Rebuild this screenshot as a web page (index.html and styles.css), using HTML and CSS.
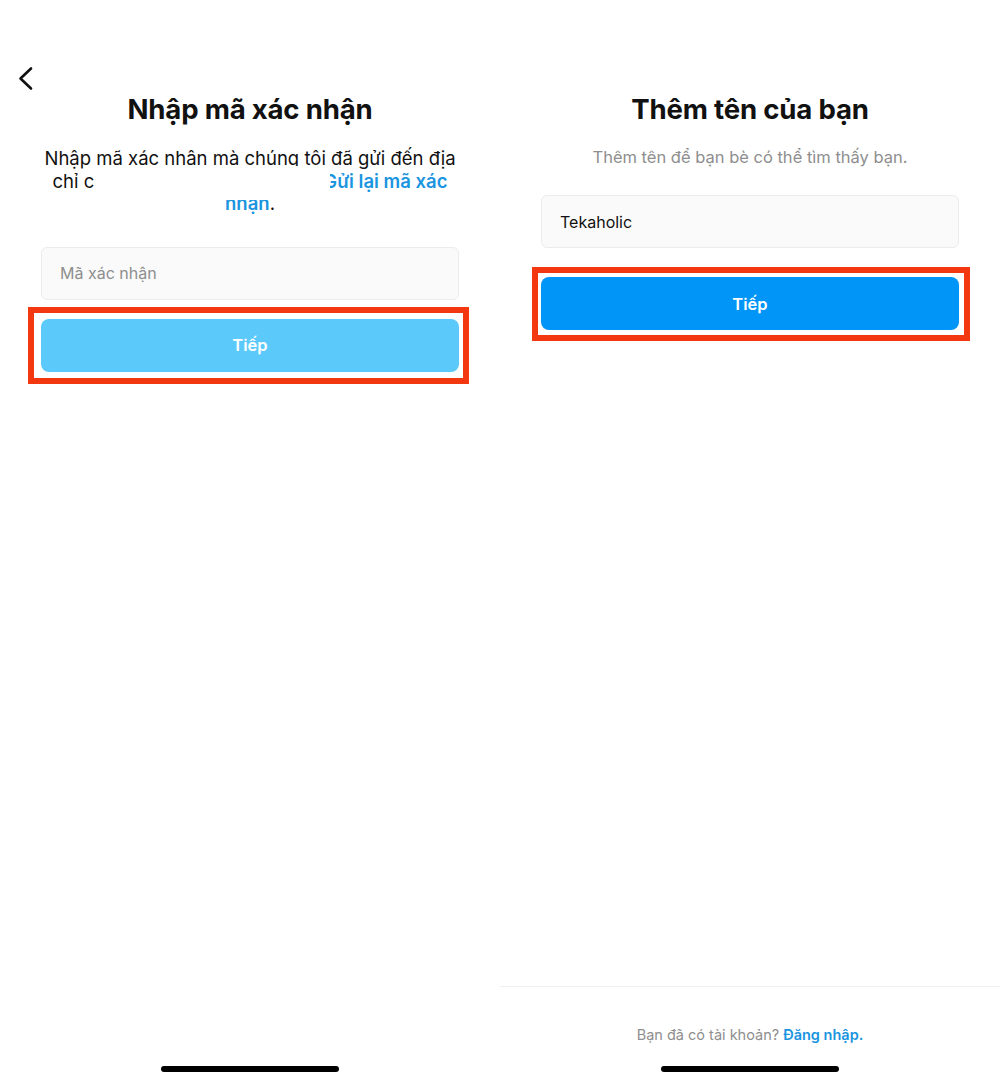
FILE: index.html
```html
<!DOCTYPE html>
<html lang="vi">
<head>
    <meta charset="UTF-8">
    <meta name="viewport" content="width=device-width, initial-scale=1.0">
    <title>Đăng ký</title>
    <link rel="stylesheet" href="styles.css">
</head>
<body>
    <div class="screens">
        <!-- Step: confirmation code -->
        <section class="screen">
            <div class="nav">
                <button class="back" aria-label="Quay lại">
                    <svg width="18" height="26" viewBox="0 0 18 26">
                        <polyline points="14,2.5 3.5,12.5 14,22.5" fill="none" stroke="#111" stroke-width="2.6" stroke-linecap="round" stroke-linejoin="round"/>
                    </svg>
                </button>
            </div>
            <div class="content">
                <h1 class="title">Nhập mã xác nhận</h1>
                <p class="desc">
                    <span class="line">Nhập mã xác nhận mà chúng tôi đã gửi đến địa</span>
                    <span class="line">chỉ c<span class="gap"></span><a class="link" href="#">Gửi lại mã xác</a></span>
                    <span class="line"><a class="link" href="#">nhận</a>.</span>
                    <span class="redacted"></span>
                </p>
                <div class="field field-code">
                    <span class="placeholder">Mã xác nhận</span>
                </div>
                <div class="highlight highlight-left">
                    <button class="btn btn-disabled">Tiếp</button>
                </div>
            </div>
            <div class="home-bar"></div>
        </section>

        <!-- Step: add name -->
        <section class="screen">
            <div class="nav"></div>
            <div class="content">
                <h1 class="title">Thêm tên của bạn</h1>
                <p class="subtitle">Thêm tên để bạn bè có thể tìm thấy bạn.</p>
                <div class="field field-name">
                    <span class="value">Tekaholic</span>
                </div>
                <div class="highlight highlight-right">
                    <button class="btn">Tiếp</button>
                </div>
            </div>
            <div class="footer">
                Bạn đã có tài khoản? <a class="link" href="#">Đăng nhập.</a>
            </div>
            <div class="home-bar"></div>
        </section>
    </div>
</body>
</html>
```

FILE: styles.css
```css
:root {
    --text: #111111;
    --muted: #8e8e8e;
    --field-bg: #fafafa;
    --field-border: #ececec;
    --link: #1b95e0;
    --btn: #0095f6;
    --btn-disabled: #5cc9fb;
    --mark: #f3370f;
}

* {
    margin: 0;
    padding: 0;
    box-sizing: border-box;
}

body {
    font-family: Inter, "Noto Sans", sans-serif;
    background: #ffffff;
    color: var(--text);
}

.screens {
    display: grid;
    grid-template-columns: 500px 500px;
    height: 1082px;
}

.screen {
    display: flex;
    flex-direction: column;
    height: 1082px;
}

.nav {
    height: 93px;
    padding: 66px 0 0 17px;
}

.back {
    border: none;
    background: none;
    display: block;
}

.content {
    flex: 1;
    padding: 0 41px;
    display: flex;
    flex-direction: column;
}

.title {
    font-size: 27.6px;
    font-weight: 700;
    line-height: 32px;
    text-align: center;
    letter-spacing: -0.2px;
}

.desc {
    position: relative;
    margin-top: 22px;
    font-size: 18.5px;
    line-height: 22.5px;
    text-align: center;
}

.desc .line {
    display: block;
    white-space: nowrap;
}

.gap {
    display: inline-block;
    width: 229px;
}

/* white box hiding the e-mail address */
.redacted {
    position: absolute;
    left: 53px;
    top: 19px;
    width: 236px;
    height: 34px;
    background: #ffffff;
}

.link {
    color: var(--link);
    font-weight: 600;
    text-decoration: none;
}

.subtitle {
    margin-top: 22px;
    font-size: 16.5px;
    line-height: 20px;
    color: var(--muted);
    text-align: center;
}

.field {
    height: 53px;
    background: var(--field-bg);
    border: 1px solid var(--field-border);
    border-radius: 6px;
    display: flex;
    align-items: center;
    padding: 0 18px;
    font-size: 16px;
}

.field-code {
    margin-top: 32px;
}

.field-name {
    margin-top: 28px;
}

.placeholder {
    color: var(--muted);
}

.highlight {
    border: 6px solid var(--mark);
}

.highlight-left {
    margin: 7px -10px 0 -13px;
    padding: 6px 4px 6px 7px;
}

.highlight-right {
    margin: 19px -11px 0 -9px;
    padding: 4px 5px 5px 3px;
}

.btn {
    display: block;
    width: 100%;
    height: 53px;
    border: none;
    border-radius: 8px;
    background: var(--btn);
    color: #ffffff;
    font-family: inherit;
    font-size: 16.5px;
    font-weight: 600;
}

.btn-disabled {
    background: var(--btn-disabled);
}

.footer {
    border-top: 1px solid #efefef;
    padding: 38px 0 21px;
    text-align: center;
    font-size: 14.5px;
    line-height: 20px;
    color: var(--muted);
}

.home-bar {
    width: 178px;
    height: 6px;
    border-radius: 3px;
    background: #000000;
    margin: 0 auto 10px;
}
```
